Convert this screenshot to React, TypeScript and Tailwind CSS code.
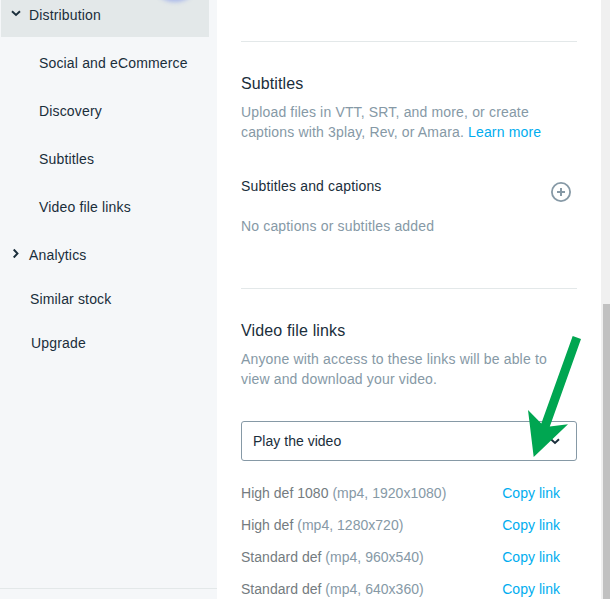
import React from "react";

const subItems = ["Social and eCommerce", "Discovery", "Subtitles", "Video file links"];

const files = [
  { name: "High def 1080", detail: "(mp4, 1920x1080)" },
  { name: "High def", detail: "(mp4, 1280x720)" },
  { name: "Standard def", detail: "(mp4, 960x540)" },
  { name: "Standard def", detail: "(mp4, 640x360)" },
];

function Chevron({ className }: { className: string }) {
  return (
    <svg width="10" height="7" viewBox="0 0 10 7" className={className} fill="none" stroke="currentColor" strokeWidth="1.9">
      <path d="M1 1.2 5 5l4-3.8" />
    </svg>
  );
}

function Sidebar() {
  return (
    <nav className="flex w-[217px] shrink-0 flex-col bg-[#f5f7f9] text-[#1a2e3b]">
      <div className="relative ml-px flex h-[37px] w-[208px] items-start overflow-hidden bg-[#e3e8e9] pt-[5px] leading-5">
        <Chevron className="ml-[10px] mt-[5px] shrink-0" />
        <span className="ml-2">Distribution</span>
        <div className="absolute -top-[46px] left-[150px] size-12 rounded-full bg-[#a9b8ea] blur-[2px]" />
      </div>
      <ul className="mt-[2px]">
        {subItems.map((item) => (
          <li key={item} className="flex h-12 items-center pl-[39px]">{item}</li>
        ))}
      </ul>
      <div className="flex h-12 items-center pl-[11px]">
        <Chevron className="mb-1 shrink-0 -rotate-90" />
        <span className="ml-2">Analytics</span>
      </div>
      <div className="flex h-10 items-center pl-[30px]">Similar stock</div>
      <div className="mt-1 flex h-10 items-center pl-[31px]">Upgrade</div>
      <div className="mt-auto h-[11px] border-t border-[#e3e8e9]" />
    </nav>
  );
}

export default function App() {
  return (
    <div className="relative flex h-[599px] w-[610px] overflow-hidden bg-white font-['Liberation_Sans',Arial,sans-serif] text-sm leading-5 tracking-[0.16px]">
      <Sidebar />
      <main className="w-[384px] shrink-0 pl-6 pr-6 pt-[41px] text-[#8699a6]">
        <section className="h-[247px] border-t border-[#e3e8e9] pt-[30px]">
          <h2 className="text-base leading-6 tracking-[0.1px] text-[#1a2e3b]">Subtitles</h2>
          <p className="mt-[6px] whitespace-nowrap">
            Upload files in VTT, SRT, and more, or create
            <br />
            captions with 3play, Rev, or Amara. <a className="text-[#00adef]">Learn more</a>
          </p>
          <div className="mt-[34px] flex h-5 justify-between text-[#1a2e3b]">
            <h3>Subtitles and captions</h3>
            <svg width="20" height="20" viewBox="0 0 20 20" className="mr-[6px] mt-[6px]" fill="none" stroke="#8699a6">
              <circle cx="10" cy="10" r="9.1" strokeWidth="1.8" />
              <path d="M6 10h8M10 6v8" strokeWidth="2" />
            </svg>
          </div>
          <p className="mt-5">No captions or subtitles added</p>
        </section>
        <section className="border-t border-[#e3e8e9] pt-[30px]">
          <h2 className="text-base leading-6 tracking-[0.15px] text-[#1a2e3b]">Video file links</h2>
          <p className="mt-[6px] whitespace-nowrap">
            Anyone with access to these links will be able to
            <br />
            view and download your video.
          </p>
          <div className="mt-8 flex h-10 items-center justify-between rounded-[3px] border border-[#8699a6] pl-[11px] pr-4 tracking-[0.02px] text-[#1a2e3b]">
            Play the video
            <Chevron className="mt-px" />
          </div>
          <ul className="mt-4 tracking-[0.02px]">
            {files.map((file) => (
              <li key={file.detail} className="flex h-8 items-center justify-between pr-[17px]">
                <span><span className="text-[#747b80]">{file.name}</span> {file.detail}</span>
                <a className="text-[#00adef]">Copy link</a>
              </li>
            ))}
          </ul>
        </section>
      </main>
      <div className="w-[9px] shrink-0 bg-[#f0f0f0] pl-[2px] pt-[304px]">
        <div className="h-[295px] bg-[#c1c1c1]" />
      </div>
      <svg className="pointer-events-none absolute left-[520px] top-[330px]" width="70" height="135" viewBox="520 330 70 135">
        <path d="M572.7 336 581 339 549.8 426.5 568 424.2 533.7 457 528 410 541.3 423.5Z" fill="#00a651" />
      </svg>
    </div>
  );
}
